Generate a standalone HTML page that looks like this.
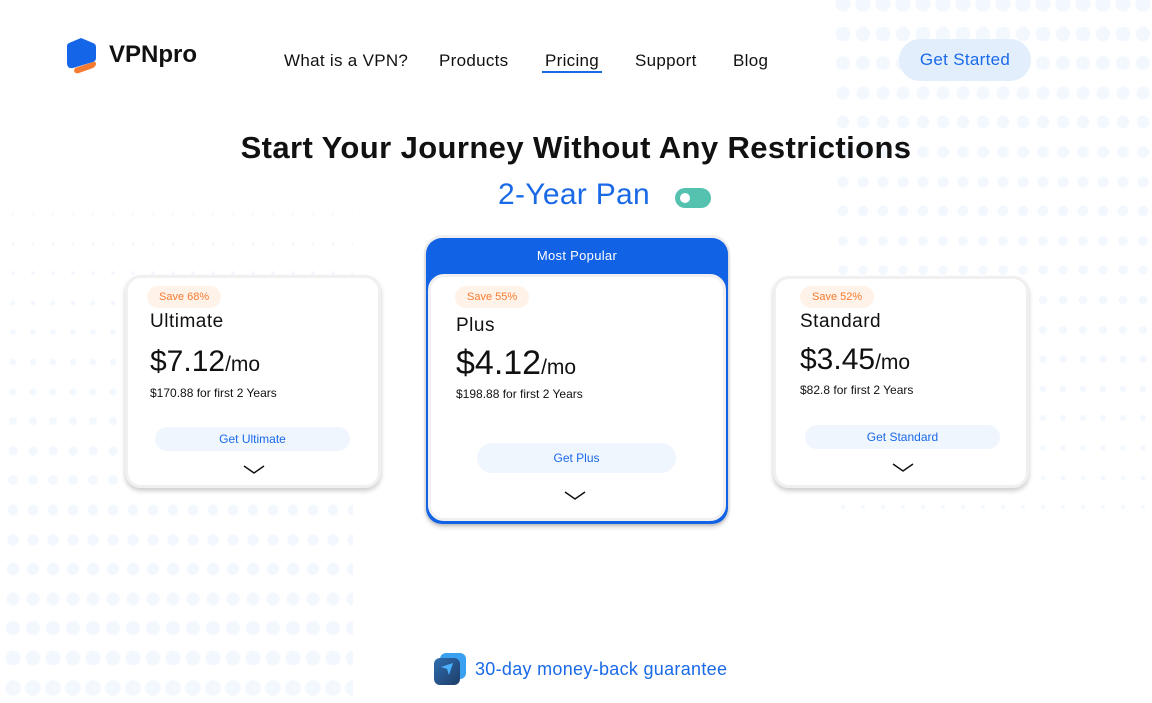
<!DOCTYPE html>
<html><head><meta charset="utf-8"><style>
*{margin:0;padding:0;box-sizing:border-box}
body{width:1152px;height:700px;overflow:hidden;background:#fff;font-family:"Liberation Sans",sans-serif;position:relative;color:#111}
.row{position:absolute;height:30px;background-size:20px 30px;background-repeat:repeat-x}
.abs{position:absolute}
.nav a{position:absolute;top:51px;font-size:17px;color:#111;text-decoration:none;letter-spacing:0.3px}
.card{position:absolute;background:#fff;border:3px solid #f0f0f0;border-radius:16px;box-shadow:0 3px 5px rgba(0,0,0,.2)}
.save{position:absolute;background:#fff2e8;color:#f47c32;font-size:11px;border-radius:11px;height:22px;line-height:22px;padding:0 12px}
.name{position:absolute;font-size:19px;letter-spacing:.5px}
.price{position:absolute;font-size:30px;white-space:nowrap}
.price span{font-size:21px}
.sub{position:absolute;font-size:12px;white-space:nowrap}
.btn{position:absolute;background:#f0f6fe;color:#1a6ae8;font-size:12px;text-align:center;border-radius:14px}
.chev{position:absolute;width:22px;height:10px}
</style></head><body>
<div id="dots"></div>
<script>
(function(){var h='';var c='#f3f8ff',c0='rgba(243,248,255,0)';
for(var i=0;i<18;i++){var y=4+29.6*i-15;var r=Math.max(7.3-i*0.33,1.2);
h+='<div class="row" style="left:833px;width:319px;top:'+y+'px;background-image:radial-gradient(circle at 10px 15px,'+c+' '+r+'px,'+c0+' '+(r+0.7)+'px)"></div>';}
for(var i=0;i<17;i++){var y=214+29.6*i-15;var r=0.8+i*0.42;
h+='<div class="row" style="left:3px;width:350px;top:'+y+'px;background-image:radial-gradient(circle at 10px 15px,'+c+' '+r+'px,'+c0+' '+(r+0.7)+'px)"></div>';}
document.getElementById('dots').innerHTML=h;})();
</script>
<svg class="abs" style="left:65px;top:37px" width="34" height="37" viewBox="0 0 34 37"><path d="M4 6 L16 1 L28 6 Q31 7 31 10 L31 21 Q31 24 28 25 L8 31 Q2 32 2 26 L2 9 Q2 7 4 6Z" fill="#1565e8"/><path d="M10 31 L28 25 Q31 24 31 27 Q31 29 28 31 L14 36 Q10 37 9 34Z" fill="#f47c32"/></svg>
<div class="abs" style="left:109px;top:41px;font-size:24px;font-weight:bold;color:#111">VPNpro</div>
<div class="nav">
<a style="left:284px">What is a VPN?</a>
<a style="left:439px">Products</a>
<a style="left:545px">Pricing</a>
<a style="left:635px">Support</a>
<a style="left:733px">Blog</a>
</div>
<div class="abs" style="left:542px;top:71px;width:60px;height:2px;background:#1a6ae8"></div>
<div class="abs" style="left:899px;top:39px;width:132px;height:42px;border-radius:21px;background:#e2eefc;color:#1a6ae8;font-size:17px;text-align:center;line-height:42px;letter-spacing:.3px">Get Started</div>
<div class="abs" style="left:0;width:1152px;top:130px;text-align:center;font-size:31px;font-weight:bold;letter-spacing:.4px">Start Your Journey Without Any Restrictions</div>
<div class="abs" style="left:498px;top:178px;font-size:30px;color:#1a6ae8;letter-spacing:.3px">2-Year Pan</div>
<div class="abs" style="left:675px;top:188px;width:36px;height:20px;border-radius:10px;background:#55c2b0"></div>
<div class="abs" style="left:680px;top:193px;width:10px;height:10px;border-radius:50%;background:#fff"></div>

<div class="card" style="left:125px;top:275px;width:256px;height:213px">
<div class="save" style="left:19px;top:8px">Save 68%</div>
<div class="name" style="left:22px;top:33px">Ultimate</div>
<div class="price" style="left:22px;top:67px">$7.12<span>/mo</span></div>
<div class="sub" style="left:22px;top:108px">$170.88 for first 2 Years</div>
<div class="btn" style="left:27px;top:149px;width:195px;height:24px;line-height:24px">Get Ultimate</div>
<svg class="chev" style="left:115px;top:187px" viewBox="0 0 22 10"><path d="M1 1 L11 8 L21 1" fill="none" stroke="#111" stroke-width="1.5"/></svg>
</div>

<div class="abs" style="left:424px;top:235px;width:306px;height:291px;border-radius:18px;background:#f0f0f0"></div>
<div class="abs" style="left:426px;top:238px;width:302px;height:286px;border-radius:16px;background:#1262e6;box-shadow:0 3px 5px rgba(0,0,0,.2)"></div>
<div class="abs" style="left:426px;top:248px;width:302px;text-align:center;color:#fff;font-size:13px;letter-spacing:.3px">Most Popular</div>
<div class="abs" style="left:428px;top:274px;width:298px;height:247px;border-radius:16px;background:#fff;border:3px solid #f0f0f0">
<div class="save" style="left:24px;top:9px">Save 55%</div>
<div class="name" style="left:25px;top:38px">Plus</div>
<div class="price" style="left:25px;top:67px;font-size:34px">$4.12<span>/mo</span></div>
<div class="sub" style="left:25px;top:110px">$198.88 for first 2 Years</div>
<div class="btn" style="left:46px;top:166px;width:199px;height:30px;line-height:30px;border-radius:15px">Get Plus</div>
<svg class="chev" style="left:133px;top:214px" viewBox="0 0 22 10"><path d="M1 1 L11 8 L21 1" fill="none" stroke="#111" stroke-width="1.5"/></svg>
</div>

<div class="card" style="left:773px;top:276px;width:256px;height:212px">
<div class="save" style="left:24px;top:7px">Save 52%</div>
<div class="name" style="left:24px;top:32px">Standard</div>
<div class="price" style="left:24px;top:64px">$3.45<span>/mo</span></div>
<div class="sub" style="left:24px;top:104px">$82.8 for first 2 Years</div>
<div class="btn" style="left:29px;top:146px;width:195px;height:24px;line-height:24px">Get Standard</div>
<svg class="chev" style="left:116px;top:184px" viewBox="0 0 22 10"><path d="M1 1 L11 8 L21 1" fill="none" stroke="#111" stroke-width="1.5"/></svg>
</div>

<svg class="abs" style="left:433px;top:652px" width="34" height="34" viewBox="0 0 34 34"><rect x="7" y="1" width="26" height="26" rx="6" fill="#3aa0f0"/><defs><linearGradient id="g" x1="0" y1="0" x2="1" y2="1"><stop offset="0" stop-color="#2f6db0"/><stop offset="1" stop-color="#1e3d66"/></linearGradient></defs><rect x="1" y="6" width="26" height="27" rx="6" fill="url(#g)"/><path d="M8 15 L20 11 L16 23 L14 17Z" fill="#4ab0ff"/></svg>
<div class="abs" style="left:475px;top:659px;font-size:18px;color:#1a6ae8;letter-spacing:.3px">30-day money-back guarantee</div>
</body></html>
